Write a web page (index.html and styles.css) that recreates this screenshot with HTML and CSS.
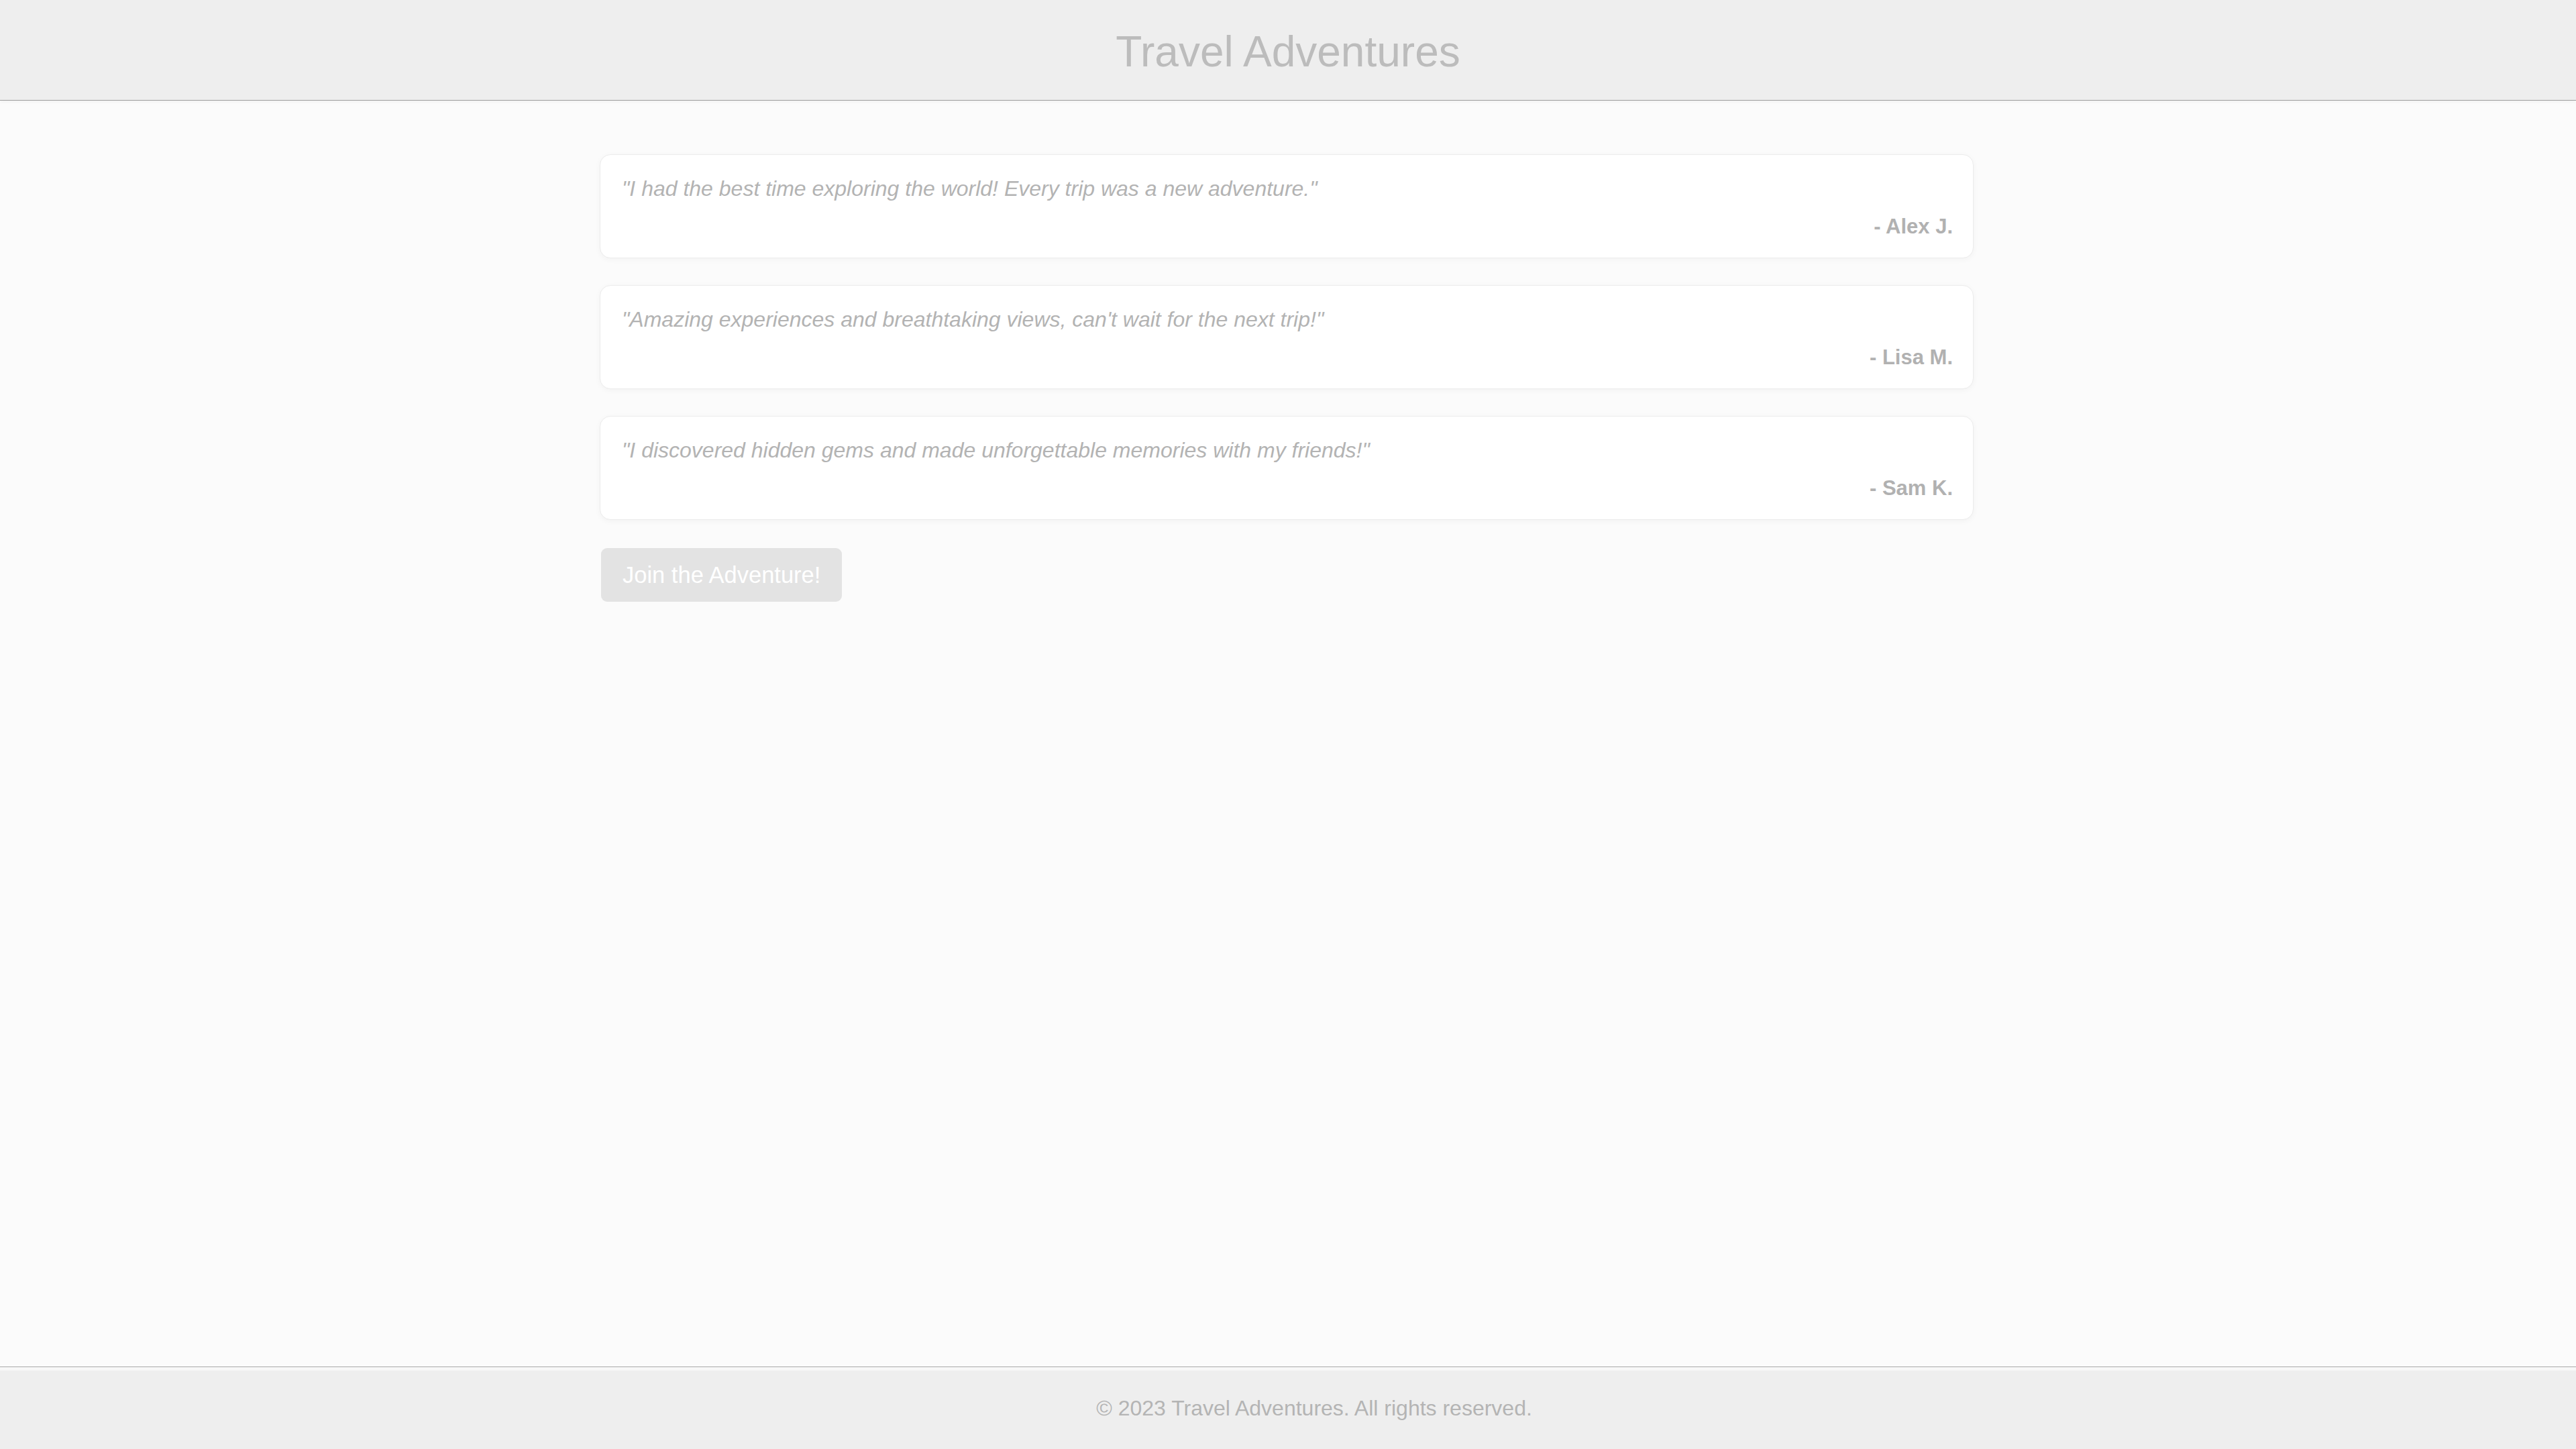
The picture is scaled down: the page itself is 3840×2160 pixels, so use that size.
FILE: index.html
```html
<!DOCTYPE html>
<html lang="en">
<head>
<meta charset="utf-8">
<title>Travel Adventures</title>
<link rel="stylesheet" href="styles.css">
</head>
<body>
<header class="site-header">
  <h1 class="site-title">Travel Adventures</h1>
</header>
<main class="content">
  <section class="testimonials">
    <article class="card">
      <p class="quote">"I had the best time exploring the world! Every trip was a new adventure."</p>
      <p class="author">- Alex J.</p>
    </article>
    <article class="card">
      <p class="quote">"Amazing experiences and breathtaking views, can't wait for the next trip!"</p>
      <p class="author">- Lisa M.</p>
    </article>
    <article class="card">
      <p class="quote">"I discovered hidden gems and made unforgettable memories with my friends!"</p>
      <p class="author">- Sam K.</p>
    </article>
  </section>
  <div class="actions">
    <button class="cta" type="button">Join the Adventure!</button>
  </div>
</main>
<footer class="site-footer">
  <p class="copy">© 2023 Travel Adventures. All rights reserved.</p>
</footer>
</body>
</html>
```

FILE: styles.css
```css
* { box-sizing: border-box; }
html, body { height: 100%; }
body {
  margin: 0;
  font-family: "Liberation Sans", Arial, sans-serif;
  background: #fbfbfb;
  display: flex;
  flex-direction: column;
  min-height: 100vh;
}
.site-header {
  background: #eeeeee;
  height: 150px;
  border-bottom: 1px solid #9e9e9e;
  box-shadow: 0 3px 4px rgba(0, 0, 0, 0.03);
  display: flex;
  align-items: center;
  justify-content: center;
}
.site-title {
  margin: 0;
  font-size: 64px;
  font-weight: normal;
  color: #bcbcbc;
  line-height: 1;
  padding-top: 4px;
}
.content {
  flex: 1;
  width: 2052px;
  margin: 0 auto;
  padding: 80px 4px 0 0;
}
.testimonials {
  display: flex;
  flex-direction: column;
  gap: 40px;
}
.card {
  background: #ffffff;
  border: 1px solid #ececec;
  border-radius: 16px;
  box-shadow: 0 2px 8px rgba(0, 0, 0, 0.04);
  padding: 32px 30px 28px 32px;
}
.quote {
  margin: 0 0 20px;
  font-size: 32px;
  font-style: italic;
  color: #b3b3b3;
}
.author {
  margin: 0;
  text-align: right;
  font-size: 31px;
  font-weight: bold;
  color: #b1b1b1;
}
.actions {
  margin-top: 42px;
  padding-left: 2px;
}
.cta {
  font-family: "Liberation Sans", Arial, sans-serif;
  font-size: 34.5px;
  color: #ffffff;
  background: #e3e3e3;
  border: none;
  border-radius: 9px;
  padding: 0 32px;
  height: 80px;
  cursor: pointer;
}
.site-footer {
  background: #eeeeee;
  border-top: 1px solid #aaaaaa;
  box-shadow: inset 0 5px 0 #f8f8f8;
  padding: 43px 0 42px 78px;
  text-align: center;
}
.copy {
  margin: 0;
  font-size: 32px;
  color: #b4b4b4;
}
```
